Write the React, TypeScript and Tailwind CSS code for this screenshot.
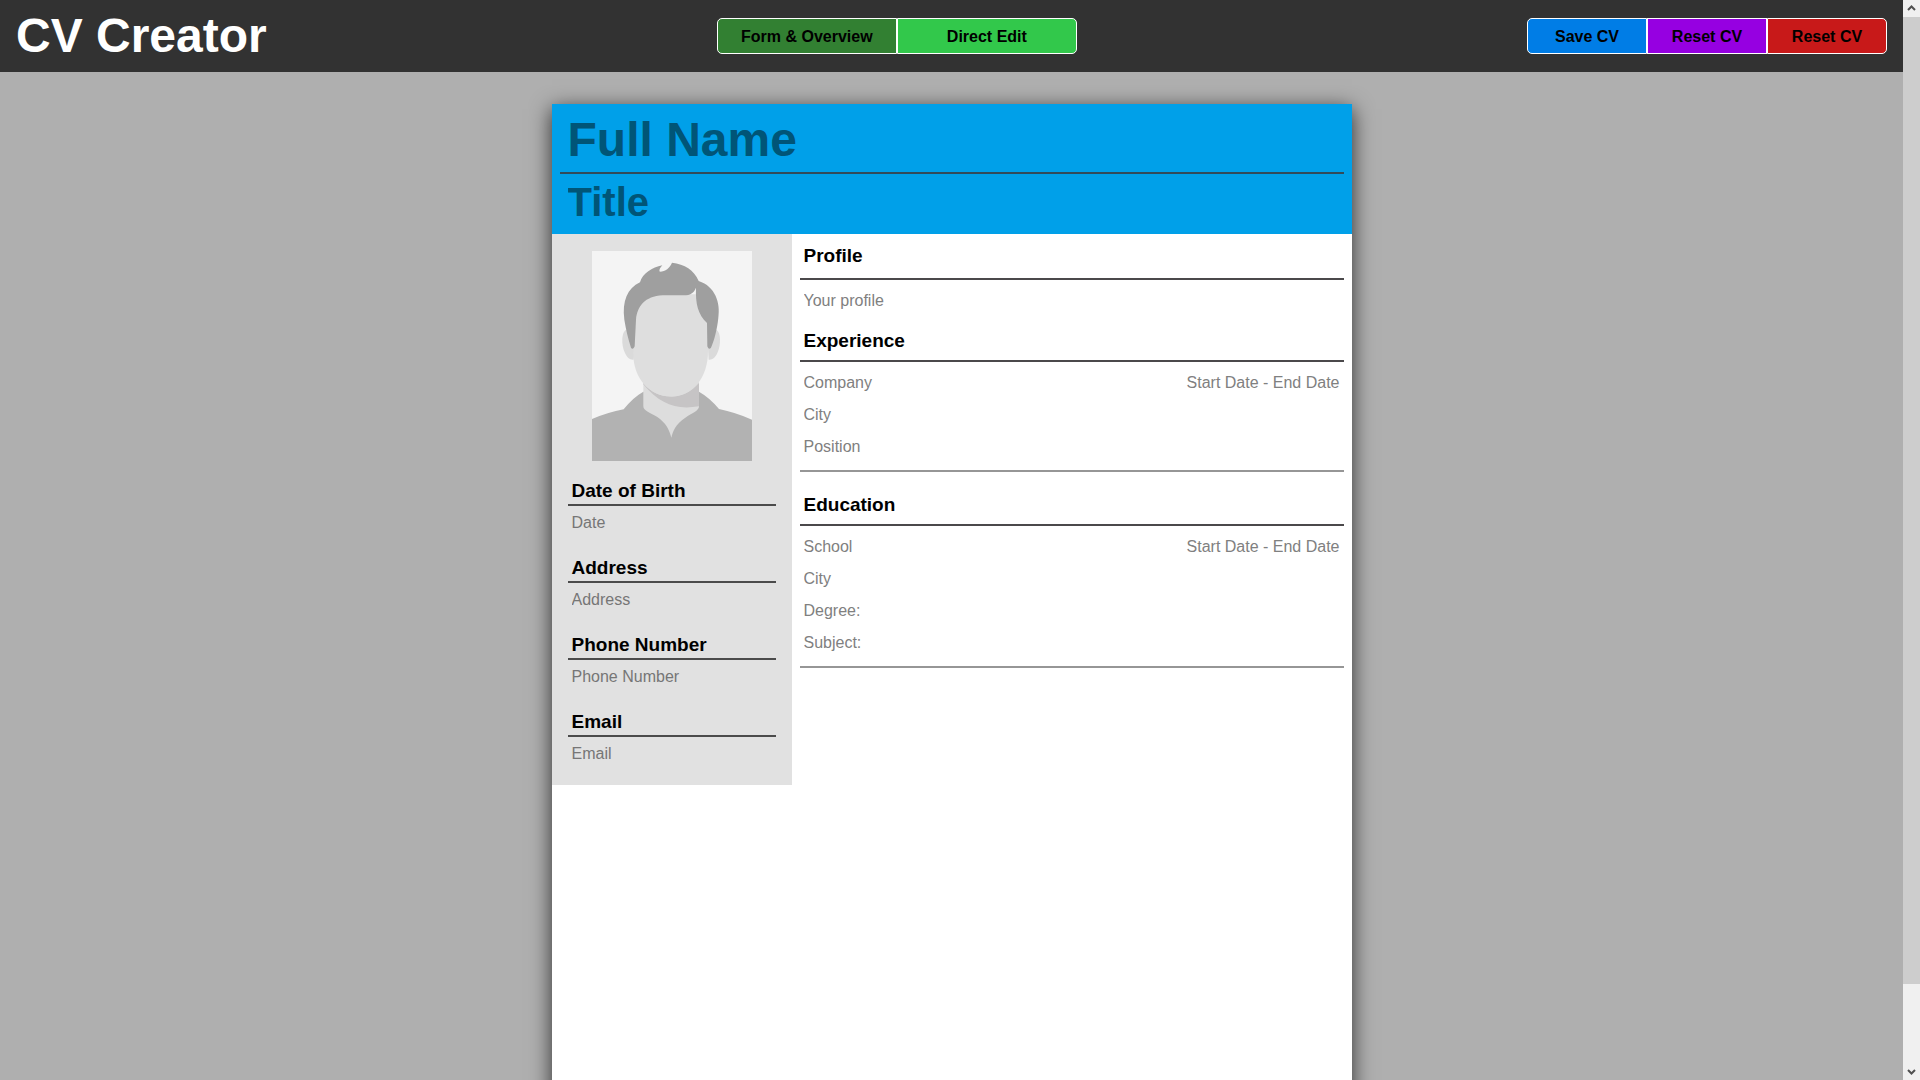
import React from "react";

type FieldProps = { label: string; className?: string };

function Field({ label, className = "" }: FieldProps) {
  return (
    <input
      type="text"
      aria-label={label}
      placeholder={label}
      className={`block h-8 w-full min-w-0 bg-transparent px-1 text-base outline-none placeholder:text-[#808080] ${className}`}
    />
  );
}

function Portrait() {
  return (
    <svg viewBox="0 0 480 630" preserveAspectRatio="none" className="mx-auto block h-[210px] w-40" role="img" aria-label="Profile photo">
      <rect width="480" height="630" fill="#f4f4f4" />
      <path d="M0 504Q48 484 95 475Q122 440 154 422L321 422Q353 440 381 474Q430 484 480 506V630H0Z" fill="#b2b2b2" />
      <path d="M154 390H321V466C321 480 300 486 280 500C250 520 243 540 238 560C232 536 222 516 196 498C176 486 154 480 154 466Z" fill="#dddddd" />
      <path d="M154 396C180 428 210 437 240 436C272 436 300 420 321 396V466C250 477 205 460 154 400Z" fill="#c6c4c5" />
      <path d="M102 236C88 244 88 280 98 304C106 322 114 327 125 326L134 236ZM373 236C387 244 387 280 377 304C369 322 361 327 350 326L345 236Z" fill="#dadada" />
      <path d="M130 130H348V300C349 380 300 437 238 437C172 437 124 380 124 310Z" fill="#dedede" />
      <path d="M144 94C152 66 180 50 211 43C204 50 200 60 204 62C220 62 234 50 240 35C278 40 306 56 320 90C370 106 386 156 379 200C375 238 366 270 357 290C353 295 349 295 346 286L345 216C318 190 310 158 312 110C306 126 294 133 276 133H212C158 136 136 166 132 206L128 286C125 294 120 295 117 290C108 262 102 236 97 206C90 150 106 112 144 94Z" fill="#9f9f9f" />
    </svg>
  );
}

const details = [
  { title: "Date of Birth", hint: "Date" },
  { title: "Address", hint: "Address" },
  { title: "Phone Number", hint: "Phone Number" },
  { title: "Email", hint: "Email" },
];

function Sidebar() {
  return (
    <aside className="w-60 shrink-0 self-start bg-[#e1e1e1] px-4 pt-[17px] pb-4">
      <Portrait />
      <div className="mt-4 flex flex-col gap-4">
        {details.map(({ title, hint }) => (
          <section key={title}>
            <h3 className="border-b-2 border-[#4b4b4b] px-1 pt-px pb-px text-[19px] leading-[25px] font-bold">{title}</h3>
            <input
              type="text"
              aria-label={title}
              placeholder={hint}
              className="mt-0.5 block h-[30px] w-full bg-transparent px-1 text-base outline-none placeholder:text-[#767676]"
            />
          </section>
        ))}
      </div>
    </aside>
  );
}

function Entry({ place, rows }: { place: string; rows: string[] }) {
  return (
    <div className="border-b-2 border-[#969696] pt-[5px] pb-[7px]">
      <div className="flex items-center">
        <Field label={place} />
        <Field label="Start Date - End Date" className="text-right" />
      </div>
      {rows.map((r) => (
        <Field key={r} label={r} />
      ))}
    </div>
  );
}

function Heading({ children }: { children: React.ReactNode }) {
  return <h3 className="border-b-2 border-[#4b494b] px-1 pb-[7px] text-[19px] leading-6 font-bold">{children}</h3>;
}

const group = "h-9 border border-white pt-px text-base font-bold text-black first:rounded-l-[5px] last:rounded-r-[5px]";

export default function App() {
  return (
    <div className="flex h-screen overflow-hidden bg-[#afafaf] font-['Liberation_Sans',Arial,sans-serif] text-black">
      <div className="min-w-0 flex-1">
        <header className="flex h-18 items-center justify-between bg-[#323232] px-4">
          <h1 className="text-5xl font-bold text-white">CV Creator</h1>
          <nav className="flex" aria-label="View">
            <button className={`${group} w-45 bg-[#328032]`}>Form &amp; Overview</button>
            <button className={`${group} w-45 bg-[#32c84b]`}>Direct Edit</button>
          </nav>
          <div className="flex">
            <button className={`${group} w-30 bg-[#007de6]`}>Save CV</button>
            <button className={`${group} w-30 bg-[#9600e1]`}>Reset CV</button>
            <button className={`${group} w-30 bg-[#c81919]`}>Reset CV</button>
          </div>
        </header>

        <main className="mx-auto mt-8 min-h-screen max-w-[800px] bg-white shadow-[0_5px_20px_rgba(0,0,0,0.75)]">
          <div className="bg-[#00a0e9] px-2 pt-1 pb-2">
            <input
              type="text"
              aria-label="Full Name"
              placeholder="Full Name"
              className="block h-16 w-full px-2 pb-0.5 text-5xl font-bold outline-none placeholder:text-[#005577]"
            />
            <div className="h-0.5 bg-[#324b5a]" />
            <input
              type="text"
              aria-label="Title"
              placeholder="Title"
              className="block h-13 w-full px-2 pt-1 text-[40px] font-bold outline-none placeholder:text-[#005577]"
            />
          </div>
          <div className="flex">
            <Sidebar />
            <div className="min-w-0 flex-1 px-2">
              <section className="pt-[11px]">
                <h3 className="border-b-2 border-[#4b494b] px-1 pb-[11px] text-[19px] leading-[22px] font-bold">Profile</h3>
                <div className="pt-[5px]">
                  <Field label="Your profile" />
                </div>
              </section>
              <section className="pt-3">
                <Heading>Experience</Heading>
                <Entry place="Company" rows={["City", "Position"]} />
              </section>
              <section className="pt-[21px]">
                <Heading>Education</Heading>
                <Entry place="School" rows={["City", "Degree:", "Subject:"]} />
              </section>
            </div>
          </div>
        </main>
      </div>

      <div className="flex w-[17px] shrink-0 flex-col bg-[#f0f0f0]" aria-hidden="true">
        <svg viewBox="0 0 17 17" className="size-[17px] shrink-0">
          <path d="M5 10L8.500 6.500L12 10" fill="none" stroke="#505050" strokeWidth="2" />
        </svg>
        <div className="flex-[967] bg-[#cdcdcd]" />
        <div className="flex-[79]" />
        <svg viewBox="0 0 17 17" className="size-[17px] shrink-0">
          <path d="M5 7L8.500 10.500L12 7" fill="none" stroke="#505050" strokeWidth="2" />
        </svg>
      </div>
    </div>
  );
}
